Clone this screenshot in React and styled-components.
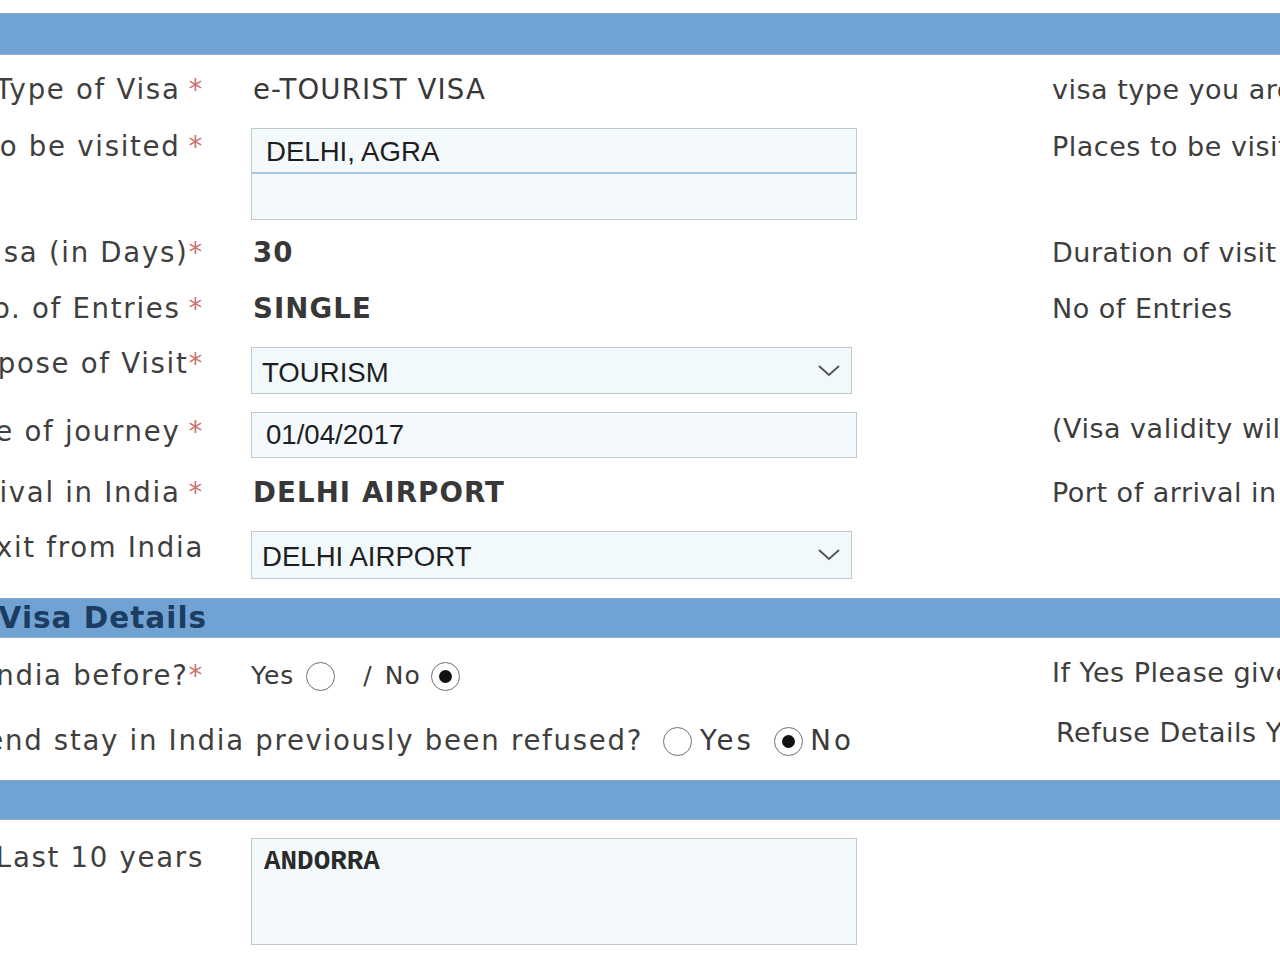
import React from 'react'
import styled, { createGlobalStyle } from 'styled-components'

const GlobalStyle = createGlobalStyle`
  html, body {
    margin: 0;
    padding: 0;
    background: #ffffff;
    overflow: hidden;
  }
  #root {
    width: 1280px;
    height: 959px;
    overflow: hidden;
  }
`;

// the page is seen scrolled, so the sheet starts left of the window
const Sheet = styled.div`
  margin-left: -300px;
  width: 1620px;
  padding-top: 13px;
  font-family: "DejaVu Sans", Verdana, sans-serif;
  font-size: 27.6px;
  line-height: 34px;
  letter-spacing: 1.1px;
  color: #3c3c3c;
`;

const SectionBar = styled.div`
  height: ${props => props.$h}px;
  box-sizing: border-box;
  background: #70a3d4;
  border-top: 1px solid #86a3bd;
  border-bottom: 1px solid #8db0cf;
  display: flex;
  align-items: center;
  padding-left: 135px;
  font-weight: bold;
  font-size: 29.5px;
  letter-spacing: 1px;
  color: #1d3c62;
  white-space: nowrap;
`;

const FormRow = styled.div`
  display: grid;
  grid-template-columns: 551px 801px 1fr;
  align-items: start;
  box-sizing: border-box;
  height: ${props => props.$h}px;
  padding-top: ${props => props.$pad || 0}px;
`;

const Label = styled.div`
  padding-right: 47px;
  display: flex;
  justify-content: flex-end;
  white-space: nowrap;
  letter-spacing: 1.7px;
  color: #3f3f3f;
`;

const Req = styled.span`
  color: #cc7272;
  margin-left: ${props => (props.$tight ? 0 : 8)}px;
`;

const Value = styled.div`
  white-space: nowrap;
  color: #383838;
  padding-left: 2px;
  font-weight: ${props => (props.$bold ? 'bold' : 'normal')};
`;

const Hint = styled.div`
  white-space: nowrap;
  color: #3d3d3d;
  font-size: 27px;
  letter-spacing: 0.5px;
`;

const TextField = styled.input`
  display: block;
  box-sizing: border-box;
  width: 606px;
  height: 46px;
  margin: 0;
  padding: 0 14px;
  border: 1px solid #bfc8cd;
  background: #f3f9fc;
  font-family: "Liberation Sans", Arial, sans-serif;
  font-size: 27.6px;
  letter-spacing: 0;
  color: #1e1e1e;
  outline: none;
`;

const PlacesBox = styled.div`
  width: 606px;
  box-sizing: border-box;
  border: 1px solid #bfc8cd;
  background: #f4f9fc;
`;

const PlacesLine = styled.div`
  height: 45px;
  box-sizing: border-box;
  border-bottom: ${props => (props.$last ? 'none' : '2px solid #a8c7de')};
  padding: 4px 14px 0;
  font-family: "Liberation Sans", Arial, sans-serif;
  font-size: 27.6px;
  letter-spacing: 0;
  line-height: 38px;
  color: #1e1e1e;
`;

const SelectBox = styled.div`
  width: 601px;
  height: ${props => props.$h || 47}px;
  box-sizing: border-box;
  border: 1px solid #bfc8cd;
  background: #f2f9fc;
  display: flex;
  align-items: center;
  justify-content: space-between;
  padding: 4px 10px 0 10px;
  font-family: "Liberation Sans", Arial, sans-serif;
  font-size: 27.6px;
  letter-spacing: 0;
  color: #1e1e1e;
`;

const Chevron = () => (
  <svg width="24" height="14" viewBox="0 0 24 14" style={{ marginTop: -4 }}>
    <path d="M2 2 L12 11 L22 2" fill="none" stroke="#555" strokeWidth="2" />
  </svg>
);

const AreaField = styled.div`
  width: 606px;
  height: 107px;
  box-sizing: border-box;
  border: 1px solid #bdc7cc;
  background: #f4f9fc;
  padding: 6px 12px;
  font-family: "Liberation Mono", "Courier New", monospace;
  font-weight: bold;
  font-size: 27.6px;
  letter-spacing: 0;
  line-height: 34px;
  color: #2a2a2a;
`;

const Options = styled.div`
  display: flex;
  align-items: center;
  white-space: nowrap;
  font-size: ${props => props.$size || 27.6}px;
  letter-spacing: ${props => props.$spacing || 1}px;
  padding-left: ${props => props.$indent || 0}px;
  color: #3a3a3a;
`;

const Radio = styled.span`
  display: inline-flex;
  align-items: center;
  justify-content: center;
  box-sizing: border-box;
  width: 29px;
  height: 29px;
  border-radius: 50%;
  border: 1.5px solid #707070;
  background: #ffffff;
  margin: 0 ${props => props.$after || 8}px 0 ${props => props.$before || 0}px;

  &::after {
    content: '';
    width: 13px;
    height: 13px;
    border-radius: 50%;
    background: ${props => (props.$on ? '#111' : 'transparent')};
  }
`;

const Slash = styled.span`
  margin: 0 12px 0 20px;
`;

const RefuseRow = styled.div`
  display: grid;
  grid-template-columns: 951px 405px 1fr;
  align-items: start;
  box-sizing: border-box;
  height: 72px;
  padding-top: 16px;
`;

const Question = styled.div`
  padding-right: 8px;
  display: flex;
  justify-content: flex-end;
  white-space: nowrap;
  letter-spacing: 1.7px;
  color: #3f3f3f;
`;

export default function App () {
  return (
    <>
      <GlobalStyle />
      <Sheet>
        <SectionBar $h={42}></SectionBar>

        <FormRow $h={63} $pad={18}>
          <Label>Type of Visa<Req>*</Req></Label>
          <Value>e-TOURIST VISA</Value>
          <Hint>visa type you are applying for</Hint>
        </FormRow>

        <FormRow $h={118} $pad={10}>
          <Label style={{ paddingTop: 2 }}>Places to be visited<Req>*</Req></Label>
          <PlacesBox>
            <PlacesLine>DELHI, AGRA</PlacesLine>
            <PlacesLine $last></PlacesLine>
          </PlacesBox>
          <Hint style={{ paddingTop: 2 }}>Places to be visited in India</Hint>
        </FormRow>

        <FormRow $h={56}>
          <Label>Duration of Visa (in Days)<Req $tight>*</Req></Label>
          <Value $bold>30</Value>
          <Hint>Duration of visit in India</Hint>
        </FormRow>

        <FormRow $h={55}>
          <Label>No. of Entries<Req>*</Req></Label>
          <Value $bold>SINGLE</Value>
          <Hint>No of Entries</Hint>
        </FormRow>

        <FormRow $h={65}>
          <Label>Purpose of Visit<Req $tight>*</Req></Label>
          <SelectBox>
            <span>TOURISM</span>
            <Chevron />
          </SelectBox>
          <div></div>
        </FormRow>

        <FormRow $h={64}>
          <Label style={{ paddingTop: 3 }}>Expected Date of journey<Req>*</Req></Label>
          <TextField readOnly value="01/04/2017" />
          <Hint>(Visa validity will start from the date of ETA grant)</Hint>
        </FormRow>

        <FormRow $h={55}>
          <Label>Port of Arrival in India<Req>*</Req></Label>
          <Value $bold>DELHI AIRPORT</Value>
          <Hint>Port of arrival in India</Hint>
        </FormRow>

        <FormRow $h={67}>
          <Label>Expected Port of Exit from India</Label>
          <SelectBox $h={48}>
            <span>DELHI AIRPORT</span>
            <Chevron />
          </SelectBox>
          <div></div>
        </FormRow>

        <SectionBar $h={40}>Previous Visa Details</SectionBar>

        <FormRow $h={70} $pad={21}>
          <Label>Have you ever visited India before?<Req $tight>*</Req></Label>
          <Options $size={25} $spacing={1}>
            <span>Yes</span>
            <Radio $before={12} $after={0} />
            <Slash>/</Slash>
            <span>No</span>
            <Radio $before={10} $after={0} $on />
          </Options>
          <Hint style={{ marginTop: -3 }}>If Yes Please give details</Hint>
        </FormRow>

        <RefuseRow>
          <Question>Has permission to visit or to extend stay in India previously been refused?</Question>
          <Options $indent={12} $spacing={3.2}>
            <Radio />
            <span>Yes</span>
            <Radio $before={20} $after={7} $on />
            <span>No</span>
          </Options>
          <Hint style={{ marginTop: -8 }}>Refuse Details Yes/No</Hint>
        </RefuseRow>

        <SectionBar $h={40}></SectionBar>

        <FormRow $h={140} $pad={18}>
          <Label style={{ paddingTop: 3 }}>Countries Visited in Last 10 years</Label>
          <AreaField>ANDORRA</AreaField>
          <div></div>
        </FormRow>
      </Sheet>
    </>
  )
}
